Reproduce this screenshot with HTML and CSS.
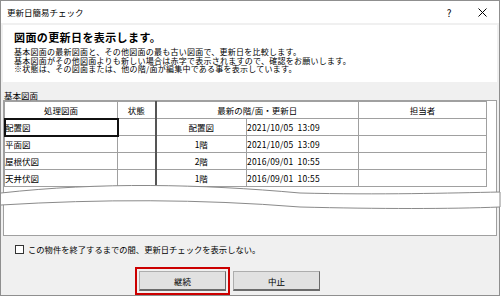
FILE: index.html
```html
<!DOCTYPE html>
<html lang="ja">
<head>
    <meta charset="UTF-8">
    <title>更新日簡易チェック</title>
    <link rel="stylesheet" href="styles.css">
</head>
<body>
    <div class="window">
        <div class="titlebar">
            <span class="title">更新日簡易チェック</span>
            <span class="help">?</span>
            <span class="close">
                <svg width="9" height="9" viewBox="0 0 9 9"><path d="M0.5 0.5 L8.5 8.5 M8.5 0.5 L0.5 8.5" stroke="#000" stroke-width="1"/></svg>
            </span>
        </div>

        <div class="client">
            <div class="header">
                <h1>図面の更新日を表示します。</h1>
                <p class="intro">
                    基本図面の最新図面と、その他図面の最も古い図面で、更新日を比較します。<br>
                    基本図面がその他図面よりも新しい場合は赤字で表示されますので、確認をお願いします。<br>
                    ※状態は、その図面または、他の階/面が編集中である事を表示しています。
                </p>
            </div>

            <div class="group-label">基本図面</div>
            <div class="list">
                <table class="grid">
                    <colgroup>
                        <col class="c-name">
                        <col class="c-state">
                        <col class="c-floor">
                        <col class="c-date">
                        <col class="c-user">
                    </colgroup>
                    <tr>
                        <th>処理図面</th>
                        <th>状態</th>
                        <th class="split" colspan="2">最新の階/面・更新日</th>
                        <th>担当者</th>
                    </tr>
                    <tr>
                        <td class="name selected">配置図</td>
                        <td></td>
                        <td class="split floor">配置図</td>
                        <td class="date">2021/10/05&nbsp;&nbsp;13:09</td>
                        <td></td>
                    </tr>
                    <tr>
                        <td class="name">平面図</td>
                        <td></td>
                        <td class="split floor">1階</td>
                        <td class="date">2021/10/05&nbsp;&nbsp;13:09</td>
                        <td></td>
                    </tr>
                    <tr>
                        <td class="name">屋根伏図</td>
                        <td></td>
                        <td class="split floor">2階</td>
                        <td class="date">2016/09/01&nbsp;&nbsp;10:55</td>
                        <td></td>
                    </tr>
                    <tr>
                        <td class="name">天井伏図</td>
                        <td></td>
                        <td class="split floor">1階</td>
                        <td class="date">2016/09/01&nbsp;&nbsp;10:55</td>
                        <td></td>
                    </tr>
                </table>
            </div>

            <label class="option">
                <span class="check"></span>
                この物件を終了するまでの間、更新日チェックを表示しない。
            </label>

            <div class="buttons">
                <span class="focus"><button class="btn">継続</button></span>
                <button class="btn">中止</button>
            </div>
        </div>

        <!-- cut mark across the list -->
        <svg class="tear" width="502" height="35" viewBox="0 180 502 35">
            <path d="M1 193 C100 182 200 184 300 193 C380 195 450 193 500 192 L500 207 C450 209 380 209 300 207 C200 199 100 199 1 205 Z" fill="#fff"/>
            <path d="M1 193 C100 182 200 184 300 193 C380 195 450 193 500 192" fill="none" stroke="#8a8a8a"/>
            <path d="M1 205 C100 199 200 199 300 207 C380 209 450 209 500 207" fill="none" stroke="#8a8a8a"/>
            <path d="M500 192 L500 207" stroke="#8a8a8a"/>
        </svg>
    </div>
</body>
</html>
```

FILE: styles.css
```css
body {
    margin: 0;
    background: #fff;
    font-family: "Noto Sans CJK JP", sans-serif;
    color: #000;
}
.window {
    position: relative;
    width: 498px;
    border: 1px solid #8f8f8f;
    background: #f0f0f0;
}
.titlebar {
    height: 22px;
    background: #fff;
    display: flex;
    align-items: center;
}
.title {
    flex: 1;
    margin-left: 6px;
    font-size: 8.5px;
}
.help {
    width: 34px;
    text-align: center;
    font-size: 10px;
}
.close {
    width: 33px;
    display: flex;
    justify-content: center;
}
.client {
    height: 270px;
    padding: 2px 2px 0;
}
.header {
    height: 57px;
    box-sizing: border-box;
    padding: 7px 11px 0;
    background: #fff;
}
h1 {
    margin: 0;
    font-size: 11px;
    line-height: 11px;
    font-weight: bold;
    letter-spacing: 0.4px;
}
.intro {
    margin: 5px 0 0;
    font-size: 8px;
    line-height: 8.5px;
    letter-spacing: 0.25px;
}
.group-label {
    margin: 8px 0 0 1px;
    font-size: 8.5px;
    line-height: 10px;
}
.list {
    height: 136px;
    box-sizing: border-box;
    border: 1px solid #a0a0a0;
    background: #fff;
}
.grid {
    border-collapse: collapse;
    table-layout: fixed;
    width: 483px;
    font-size: 8.5px;
}
.c-name { width: 113px; }
.c-state { width: 38px; }
.c-floor { width: 91px; }
.c-date { width: 112px; }
.c-user { width: 128px; }
.grid th,
.grid td {
    height: 16px;
    padding: 0;
    border: 1px solid #a0a0a0;
    font-weight: normal;
    line-height: 14px;
    white-space: nowrap;
}
.grid th {
    text-align: center;
}
.grid .split {
    border-left: 2px solid #555;
}
.name {
    padding-left: 1px;
}
.selected {
    outline: 2px solid #111;
    outline-offset: -1px;
}
.floor {
    text-align: center;
}
.date {
    padding-left: 5px;
    letter-spacing: 0.2px;
}
.option {
    display: flex;
    align-items: center;
    height: 10px;
    margin-top: 8px;
    padding-left: 12px;
    font-size: 8.3px;
}
.check {
    width: 7px;
    height: 7px;
    margin-right: 4px;
    border: 1px solid #333;
    background: #fff;
}
.buttons {
    display: flex;
    align-items: center;
    margin: 13px 0 0 132px;
}
.focus {
    display: block;
    padding: 2px;
    border: 2px solid #cc0000;
}
.btn {
    display: block;
    width: 87px;
    height: 20px;
    padding: 0;
    border: 1px solid #adadad;
    border-right-color: #6b6b6b;
    border-bottom: 2px solid #6b6b6b;
    background: #e1e1e1;
    font-family: "Noto Sans CJK JP", sans-serif;
    font-size: 8.5px;
    color: #000;
}
.buttons > .btn {
    margin-left: 3px;
}
.tear {
    position: absolute;
    top: 179px;
    left: -1px;
}
```
